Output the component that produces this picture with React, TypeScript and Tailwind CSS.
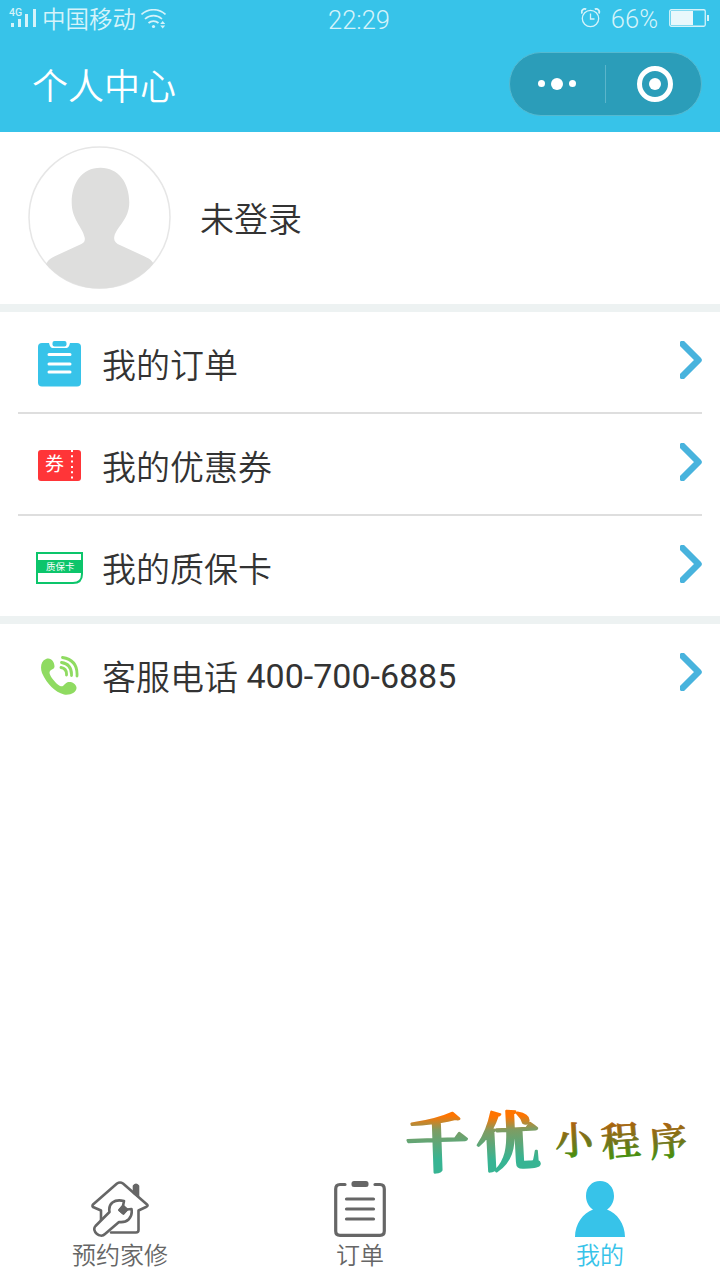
import type { ReactNode } from "react";

interface MenuRowProps {
  icon: ReactNode;
  label: string;
  value?: string;
}

function SignalIcon() {
  return (
    <div className="relative h-5 w-[30px]">
      <span className="absolute -top-[2px] left-0 font-[Roboto] text-[10.5px] leading-[12px] font-medium">4G</span>
      <svg className="h-5 w-[30px]" viewBox="0 0 30 20" fill="#d5f3fa">
        <rect x="2" y="14" width="3" height="4" />
        <rect x="9" y="10" width="3" height="8" />
        <rect x="16" y="5" width="3" height="13" />
        <rect x="24" y="0" width="3" height="18" />
      </svg>
    </div>
  );
}

function WifiIcon() {
  return (
    <svg className="ml-[5px] h-5 w-[25px]" viewBox="0 0 25 20" fill="none" stroke="#d5f3fa" strokeWidth="1.7">
      <path d="M.5 5.5a17.5 17.5 0 0 1 24 0M4 10a12.500 12.500 0 0 1 17 0M7.500 14a7.500 7.500 0 0 1 10 0" />
      <circle cx="12.500" cy="17.500" r="1.600" fill="#d5f3fa" stroke="none" />
      <path d="M19.200 15 21.700 12 24.200 15ZM19.200 16.500 21.700 19.500 24.200 16.500Z" fill="#d5f3fa" stroke="none" />
    </svg>
  );
}

function AlarmIcon() {
  return (
    <svg className="mb-[2px] h-5 w-5" viewBox="0 0 20 20" fill="none" stroke="#d5f3fa" strokeWidth="1.300">
      <circle cx="9.500" cy="10.500" r="8.200" />
      <path d="M9.500 5.500v5.500h4" />
      <path d="M1.200 5.500a3 3 0 0 1 4-4.200M17.800 5.500a3 3 0 0 0-4-4.200" strokeWidth="1.800" />
    </svg>
  );
}

function StatusBar() {
  return (
    <div className="grid h-[38px] grid-cols-[1fr_auto_1fr] items-center pr-[11px] pl-[9px] text-[#d5f3fa]">
      <div className="flex items-center">
        <SignalIcon />
        <span className="mt-[2px] ml-[3px] text-[23.5px] leading-[34px] font-[350]">中国移动</span>
        <WifiIcon />
      </div>
      <span className="mt-[2px] font-[Roboto] text-[25.5px] leading-[36px] font-light">22:29</span>
      <div className="flex items-center justify-end">
        <AlarmIcon />
        <span className="mr-[11px] ml-[10px] font-[Roboto] text-[25.5px] leading-[36px] font-light">66%</span>
        <svg className="mb-[2px] h-[18px] w-10" viewBox="0 0 40 18">
          <rect x=".75" y=".75" width="35.500" height="16.500" rx="1.500" fill="none" stroke="#d5f3fa" strokeWidth="1.300" />
          <rect x="2" y="2" width="22" height="14" fill="#e9f8fc" />
          <rect x="38" y="6" width="2" height="6" fill="#d5f3fa" />
        </svg>
      </div>
    </div>
  );
}

function Header() {
  return (
    <header className="h-[132px] bg-[#37c3e9]">
      <StatusBar />
      <div className="flex h-[94px] items-center justify-between pr-[18px] pl-8">
        <h1 className="mt-[6px] text-[36px] leading-[88px] font-[350] text-white">个人中心</h1>
        <div className="mb-[3px] flex h-16 w-[193px] items-center rounded-full border border-[#55b9d0] bg-[#2b9db9]">
          <div className="flex w-[95px] items-center justify-center gap-[6px] pr-px">
            <span className="size-[7px] rounded-full bg-white" />
            <span className="size-3 rounded-full bg-white" />
            <span className="size-[7px] rounded-full bg-white" />
          </div>
          <span className="h-[38px] w-px bg-[#5bb5cb]" />
          <div className="flex flex-1 items-center justify-center pl-[2px]">
            <div className="flex size-9 items-center justify-center rounded-full border-[5px] border-white">
              <span className="size-3 rounded-full bg-white" />
            </div>
          </div>
        </div>
      </div>
    </header>
  );
}

function Avatar() {
  return (
    <svg className="mb-px h-[143px] w-[143px]" viewBox="0 0 144 144">
      <defs>
        <clipPath id="avatar">
          <circle cx="72" cy="72" r="71.500" />
        </clipPath>
      </defs>
      <circle cx="72" cy="72" r="71" fill="#fff" stroke="#e6e6e6" strokeWidth="1.500" />
      <path
        clipPath="url(#avatar)"
        fill="#dededd"
        d="M73 22C54 22 44 38 44 57C44 74 55 82 57 92C58 96 56 98 51 100L27 111C20 114 18 118 17 124V144H128V124C127 117 124 114 117 111L93 100C88 98 86 95 87 91C89 82 102 74 102 57C102 37 91 22 73 22Z"
      />
    </svg>
  );
}

function OrderIcon() {
  return (
    <svg className="h-[46px] w-11" viewBox="0 0 44 46">
      <rect x="0" y="2" width="43" height="43.500" rx="4" fill="#37c3e9" />
      <path d="M11 1.500C11.500 5 12.500 7 15.500 7H27.500C30.500 7 31.500 5 32 1.500Z" fill="#fff" />
      <rect x="14.500" y="0" width="14" height="5.500" rx="2" fill="#37c3e9" />
      <path d="M11 13.500H32M11 23H32M11 31H32" stroke="#fff" strokeWidth="3" strokeLinecap="round" />
    </svg>
  );
}

function CouponIcon() {
  return (
    <svg className="h-[31px] w-11" viewBox="0 0 44 31">
      <rect x="0" y="0" width="43" height="31" rx="3" fill="#ff3538" />
      <path d="M34 0V31" stroke="#fff" strokeWidth="2" strokeDasharray="2 3.300" />
      <text x="7" y="21" fontSize="19" fontWeight="400" fill="#fff">券</text>
    </svg>
  );
}

function WarrantyIcon() {
  return (
    <svg className="h-8 w-12" viewBox="0 0 48 32">
      <path d="M1 1H46V22Q46 31 37 31H1Z" fill="#fff" stroke="#0cc56b" strokeWidth="2" />
      <rect x="0" y="8" width="47" height="13" fill="#0cc56b" />
      <text x="10" y="18" fontSize="9.500" fontWeight="400" fill="#fff">质保卡</text>
    </svg>
  );
}

function PhoneIcon() {
  return (
    <svg className="h-[39px] w-[38px]" viewBox="0 0 38 39">
      <path
        fill="#8fdb61"
        d="M5 3C0 5-1 11 1 17C6 28 14 36 23 38.500C30 39.500 36 36 35.500 31.500C35 27 29 25 26 26.500C22 29 23 31 19 30C14 27 9 20 8.500 17C8.500 13 13.500 14 13.500 10.500C13.500 6 10 1 5 3Z"
      />
      <path d="M20 11.500Q26 12.500 25.500 19M20.500 6.500Q31 8 30.500 19.500M21.500 1.500Q37 4 36 20" fill="none" stroke="#8fdb61" strokeWidth="2.800" strokeLinecap="round" />
    </svg>
  );
}

function MenuRow({ icon, label, value }: MenuRowProps) {
  return (
    <div className="flex h-[100px] items-center">
      <div className="mt-[3px] ml-[18px] flex w-[84px] justify-center">{icon}</div>
      <div className="mt-[7px] flex-1 text-[34px] leading-[50px] font-[350] text-[#333]">
        {label}
        {value && <span className="relative -top-[2px] font-normal"> {value}</span>}
      </div>
      <svg className="mr-[18px] mb-[5px] h-[38px] w-[22px]" viewBox="0 0 22 38">
        <path d="M2.500 3 18.500 19 2.500 35" fill="none" stroke="#48b3dd" strokeWidth="6.500" strokeLinecap="round" strokeLinejoin="round" />
      </svg>
    </div>
  );
}

function Separator() {
  return <div className="mx-[18px] h-[2px] bg-[#dedede]" />;
}

function HouseIcon() {
  return (
    <svg className="h-14 w-[58px]" viewBox="0 0 58 56" fill="none" stroke="#666" strokeWidth="2.600" strokeLinejoin="round" strokeLinecap="round">
      <path d="M10 39V29.500L2 26Q1 25 2 23.500L26 2.500Q29 .500 32 2.500L56 23.500Q57.500 25 55 26L47.500 29.500V49Q47.500 51.500 45 51.500H20" />
      <path d="M43 12V5Q45 2.500 47 5V15Z" fill="#666" />
      <path d="M4.500 45 18.500 31C17 23 23 17.500 33 20L32 25 28.500 29 32.500 32.500 36 28.500 40.500 28C42 37 36 42 28 41L14 53C9 58 0 50 4.500 45Z" fill="#fff" />
      <path d="M32 25 28.500 29 32 32 36 28.500Z" fill="#666" />
    </svg>
  );
}

function ClipboardIcon() {
  return (
    <svg className="h-14 w-[52px]" viewBox="0 0 52 56" fill="none" stroke="#666" strokeWidth="3.200" strokeLinecap="round">
      <path d="M11 3.500H6Q1.700 3.500 1.700 8V50Q1.700 54.300 6 54.300H46Q50.300 54.300 50.300 50V8Q50.300 3.500 46 3.500H41" />
      <rect x="17.500" y="0" width="17" height="6" rx="2.500" fill="#666" stroke="none" />
      <path d="M12.500 18H39.500M12.500 28H39.500M12.500 38H39.500" />
    </svg>
  );
}

function PersonIcon() {
  return (
    <svg className="h-14 w-[50px]" viewBox="0 0 50 56" fill="#37c3e9">
      <path d="M25 0C17 0 11 6 11 15C11 21 14 26 18 28.500C8 32 0 43 0 56H50C50 43 42 32 32 28.500C36 26 39 21 39 15C39 6 33 0 25 0Z" />
    </svg>
  );
}

const tabs = [
  { label: "预约家修", icon: <HouseIcon />, active: false },
  { label: "订单", icon: <ClipboardIcon />, active: false },
  { label: "我的", icon: <PersonIcon />, active: true },
];

function TabBar() {
  return (
    <nav className="grid h-[99px] grid-cols-3">
      {tabs.map((tab) => (
        <div key={tab.label} className="flex flex-col items-center">
          {tab.icon}
          <span className={`mt-px text-[24px] leading-[36px] font-[350] ${tab.active ? "text-[#37c3e9]" : "text-[#666]"}`}>
            {tab.label}
          </span>
        </div>
      ))}
    </nav>
  );
}

// Brand mark floating above the tab bar
function BrandMark() {
  return (
    <svg
      className="absolute top-[1080px] left-[400px] h-[120px] w-[310px] font-['Noto_Serif_CJK_SC','Noto_Sans_CJK_SC',serif]"
      viewBox="0 -20 310 120"
    >
      <defs>
        <linearGradient id="brand" gradientUnits="userSpaceOnUse" x1="0" y1="10" x2="0" y2="72">
          <stop offset=".1" stopColor="#ff7400" />
          <stop offset=".32" stopColor="#7f9c62" />
          <stop offset=".8" stopColor="#37b493" />
        </linearGradient>
        <linearGradient id="brandSub" gradientUnits="userSpaceOnUse" x1="0" y1="20" x2="0" y2="64">
          <stop offset="0" stopColor="#b5620c" />
          <stop offset=".5" stopColor="#70751a" />
          <stop offset="1" stopColor="#359c08" />
        </linearGradient>
      </defs>
      <g fill="url(#brand)" stroke="url(#brand)" strokeWidth="2.400" strokeLinejoin="round" fontSize="64" fontWeight="600">
        <text x="5" y="67" transform="rotate(-2 36 40)">千</text>
        <text x="76" y="65" transform="rotate(-3 108 40)">优</text>
      </g>
      <g fill="url(#brandSub)" stroke="url(#brandSub)" strokeWidth=".800" strokeLinejoin="round" fontWeight="600">
        <text x="155" y="54" fontSize="38" transform="rotate(-3 174 40)">小</text>
        <text x="201" y="55" fontSize="39" transform="rotate(-5 220 40)">程</text>
        <text x="249" y="55" fontSize="38" transform="rotate(-6 268 40)">序</text>
      </g>
    </svg>
  );
}

export default function App() {
  return (
    <div className="relative flex h-[1280px] w-[720px] flex-col overflow-hidden bg-white font-[Roboto,'Noto_Sans_CJK_SC',sans-serif]">
      <Header />
      <section className="flex h-[172px] items-center pl-[28px]">
        <Avatar />
        <span className="mt-[3px] ml-[29px] text-[34px] leading-[50px] font-[350] text-[#333]">未登录</span>
      </section>
      <div className="h-2 bg-[#edf2f2]" />
      <MenuRow icon={<OrderIcon />} label="我的订单" />
      <Separator />
      <MenuRow icon={<CouponIcon />} label="我的优惠券" />
      <Separator />
      <MenuRow icon={<WarrantyIcon />} label="我的质保卡" />
      <div className="h-2 bg-[#edf2f2]" />
      <MenuRow icon={<PhoneIcon />} label="客服电话" value="400-700-6885" />
      <div className="flex-1" />
      <TabBar />
      <BrandMark />
    </div>
  );
}
